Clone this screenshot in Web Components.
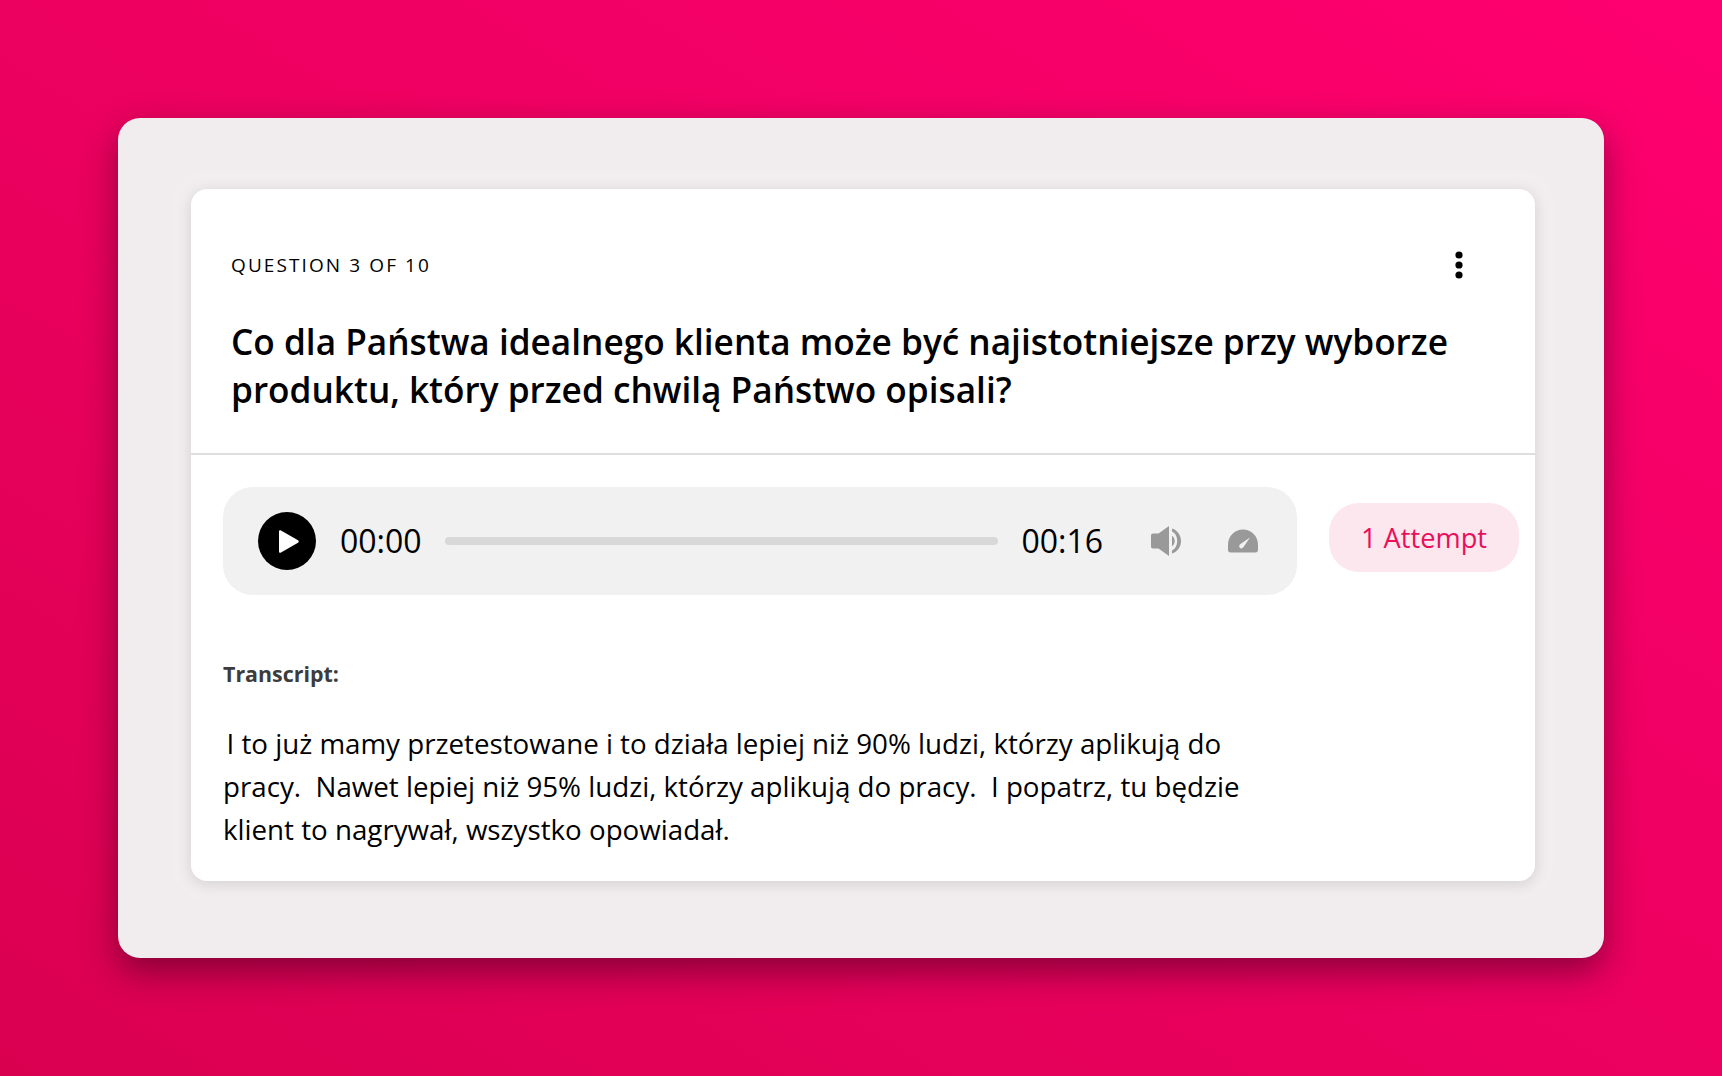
<!DOCTYPE html>
<html lang="pl"><head><meta charset="utf-8"><title>Question</title>
<style>
html,body{margin:0;height:100%}
body{font-family:"Open Sans",sans-serif;color:#000;overflow:hidden;background:linear-gradient(to bottom left,#ff0070 0%,#da0050 100%);box-sizing:border-box;padding:118px 118px 118px 118px;}
</style></head><body>
<quiz-window>
  <question-card>
    <span slot="label">QUESTION 3 OF 10</span>
    <span slot="title">Co dla Państwa idealnego klienta może być najistotniejsze przy wyborze produktu, który przed chwilą Państwo opisali?</span>
    <audio-player slot="player" current="00:00" total="00:16"></audio-player>
    <attempt-pill slot="pill">1 Attempt</attempt-pill>
    <transcript-block slot="transcript">I to już mamy przetestowane i to działa lepiej niż 90% ludzi, którzy aplikują do pracy. &nbsp;Nawet lepiej niż 95% ludzi, którzy aplikują do pracy. &nbsp;I popatrz, tu będzie klient to nagrywał, wszystko opowiadał.</transcript-block>
  </question-card>
</quiz-window>
<script>
function def(name,html){customElements.define(name,class extends HTMLElement{constructor(){super();this.attachShadow({mode:"open"}).innerHTML=typeof html==="function"?html(this):html;}});}
def("quiz-window",`<style>:host{display:block;width:1486px;height:840px;box-sizing:border-box;padding:71px 69px 77px 73px;background:#f1edef;border-radius:22px;box-shadow:0 14px 34px rgba(50,0,25,.5)}</style><slot></slot>`);
def("question-card",`<style>
:host{display:block;height:692px;width:1344px;background:#fff;border-radius:16px;box-shadow:0 3px 16px rgba(0,0,0,.13),0 0 0 19px rgba(255,255,255,.07);overflow:hidden}
header{box-sizing:border-box;height:266px;padding:58px 40px 0 40px;border-bottom:2px solid #dedede}
.top{display:flex;justify-content:space-between;align-items:center;height:36px}
.label{font-size:19px;letter-spacing:2.1px;line-height:36px}
svg{display:block;margin-right:31px}
h1{margin:34px 0 0;font-size:35.2px;font-weight:600;line-height:48px;width:1250px}
main{padding:32px 15px 0 32px}
.row{display:flex;align-items:flex-start;gap:32px}
</style>
<header><div class="top"><span class="label"><slot name="label"></slot></span>
<svg width="10" height="28" viewBox="0 0 10 28"><circle cx="5" cy="4" r="3.6"/><circle cx="5" cy="14" r="3.6"/><circle cx="5" cy="24" r="3.6"/></svg></div>
<h1><slot name="title"></slot></h1></header>
<main><div class="row"><slot name="player"></slot><slot name="pill"></slot></div><slot name="transcript"></slot></main>`);
def("audio-player",el=>`<style>
:host{display:flex;align-items:center;box-sizing:border-box;width:1074px;height:108px;padding:0 39px 0 35px;background:#f1f1f1;border-radius:30px}
.t{font-size:32px;line-height:44px}
.bar{flex:1;height:8px;background:#d8d8d8;border-radius:4px;margin:0 23px 0 23px}
svg{display:block;flex:none}
</style>
<svg width="58" height="58" viewBox="0 0 58 58"><circle cx="29" cy="29" r="29"/><path d="M21 18.500v21c0 1.200 1 1.700 2 1.100l17-9.800c1-.6 1-2 0-2.600l-17-9.800c-1-.6-2-.1-2 1.100z" fill="#fff"/></svg>
<span class="t" style="margin-left:24px">${el.getAttribute("current")}</span>
<div class="bar"></div>
<span class="t">${el.getAttribute("total")}</span>
<svg style="margin-left:48px" width="32" height="30" viewBox="0 0 32 30" fill="#999"><path d="M2 7.500h5.500L18 0v30L7.500 22.500H2c-1.200 0-2-.8-2-2v-11c0-1.200.8-2 2-2z"/><path d="M21 9.800c1.700 1 2.700 3 2.700 5.200s-1 4.200-2.700 5.200z"/><path d="M21 2.500c5.500 1.800 9 6.500 9 12.500s-3.500 10.700-9 12.500v-3c3.300-1.500 5.200-5.400 5.200-9.500S24.300 7 21 5.500z"/></svg>
<svg style="margin-left:45px" width="30" height="24" viewBox="0 0 30 24"><path fill="#999" d="M15 .5C6.700.5 0 7.200 0 15.500v5.500C0 22.500 1 23.500 2.500 23.500h25c1.500 0 2.500-1 2.500-2.500v-5.500C30 7.200 23.300.5 15 .5z"/><path fill="#f1f1f1" d="M22 8.500l-9.500 6.500c-1.500 1-1.700 2.800-.7 3.800s2.700.7 3.700-.7z"/></svg>`);
def("attempt-pill",`<style>:host{display:flex;align-items:center;justify-content:center;box-sizing:border-box;width:190px;height:69px;margin-top:16px;background:#fde7ee;color:#e8105c;border-radius:30px;font-size:27.2px;line-height:36px}</style><slot></slot>`);
def("transcript-block",`<style>:host{display:block;width:1040px;margin-top:64px;font-size:27.72px}
b{display:block;font-size:21.4px;font-weight:700;color:#3c3c3c;line-height:30px;margin-bottom:33px}
p{margin:0;line-height:43px;text-indent:3.5px}</style><b>Transcript:</b><p><slot></slot></p>`);
</script></body></html>
